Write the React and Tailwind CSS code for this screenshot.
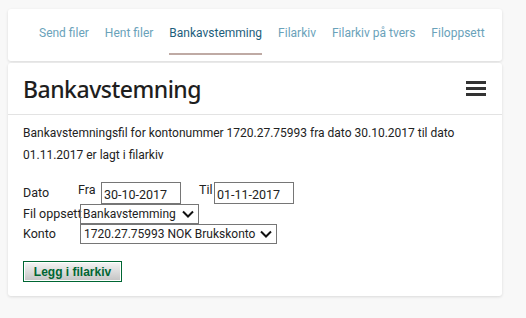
import React from 'react';

const tabs = ['Send filer', 'Hent filer', 'Bankavstemming', 'Filarkiv', 'Filarkiv på tvers', 'Filoppsett'];

const Chevron = () => (
  <svg width="12" height="8" viewBox="0 0 12 8" className="shrink-0">
    <path d="M1 1.5 L6 6.5 L11 1.5" fill="none" stroke="#111" strokeWidth="2" />
  </svg>
);

const App = () => {
  const active = 'Bankavstemming';

  return (
    <div className="min-h-screen bg-[#f8f8f8] pt-[9px] pl-2 font-['Roboto',sans-serif]">
      {/* navigasjon */}
      <div className="w-[494px] h-[52px] bg-white rounded-[3px] shadow-[0_1px_3px_rgba(0,0,0,0.12)] flex items-start pl-[31px] pt-[16px] gap-[16px]">
        {tabs.map((t) => (
          <div
            key={t}
            className={
              t === active
                ? 'whitespace-nowrap text-[12px] leading-[16px] text-[#1d5e7c] pb-[12px] border-b-[2px] border-[#bfaaa4]'
                : 'whitespace-nowrap text-[12px] leading-[16px] text-[#6aa2ba]'
            }
          >
            {t}
          </div>
        ))}
      </div>

      {/* innhold */}
      <div className="mt-[2px] w-[494px] bg-white rounded-[3px] shadow-[0_1px_3px_rgba(0,0,0,0.12)]">
        <div className="h-[52px] px-[15px] flex items-center justify-between border-b border-[#e3e3e3]">
          <h1 className="font-['Noto_Sans',sans-serif] font-medium text-[23px] leading-[30px] text-[#1e1e1e] tracking-[-0.5px]">
            Bankavstemning
          </h1>
          <div className="flex flex-col gap-[3px] w-[20px] mr-[1px]">
            <span className="block h-[3px] bg-[#333]" />
            <span className="block h-[3px] bg-[#333]" />
            <span className="block h-[3px] bg-[#333]" />
          </div>
        </div>

        <div className="px-[15px] pt-[7px] pb-[14px] text-[12px] text-[#222]">
          <p className="leading-[22px] w-[460px]">
            Bankavstemningsfil for kontonummer 1720.27.75993 fra dato 30.10.2017 til dato 01.11.2017 er lagt i filarkiv
          </p>

          <div className="mt-[16px] text-[12.5px] whitespace-nowrap">
            <div className="flex items-start h-[22px]">
              <span className="w-[55px] pt-[3px] leading-[16px]">Dato</span>
              <span className="w-[23px] leading-[16px]">Fra</span>
              <input
                readOnly
                value="30-10-2017"
                className="w-[80px] h-[22px] border border-[#767676] px-[2px] pt-[3px] text-[12.5px] text-[#222] outline-none"
              />
              <span className="ml-[18px] w-[15px] leading-[16px]">Til</span>
              <input
                readOnly
                value="01-11-2017"
                className="w-[80px] h-[22px] border border-[#767676] px-[2px] pt-[3px] text-[12.5px] text-[#222] outline-none"
              />
            </div>
            <div className="flex items-center h-[20px]">
              <span className="w-[57px] leading-[16px]">Fil oppsett</span>
              <div className="w-[119px] h-[20px] border border-[#767676] flex items-center justify-between pl-[2px] pr-[4px] text-[12px]">
                <span>Bankavstemming</span>
                <Chevron />
              </div>
            </div>
            <div className="flex items-center h-[20px]">
              <span className="w-[57px] leading-[16px]">Konto</span>
              <div className="w-[197px] h-[20px] border border-[#767676] flex items-center justify-between pl-[3px] pr-[4px] text-[12px]">
                <span>1720.27.75993 NOK Brukskonto</span>
                <Chevron />
              </div>
            </div>
          </div>

          <button className="mt-[17px] w-[99px] h-[21px] border border-[#006633] p-0 block">
            <span className="flex items-center justify-center w-full h-full border border-white bg-gradient-to-b from-[#f2f2f2] to-[#c6c6c6] font-['Liberation_Sans',sans-serif] font-bold text-[12px] text-[#006633]">
              Legg i filarkiv
            </span>
          </button>
        </div>
      </div>
    </div>
  );
};

export default App;
